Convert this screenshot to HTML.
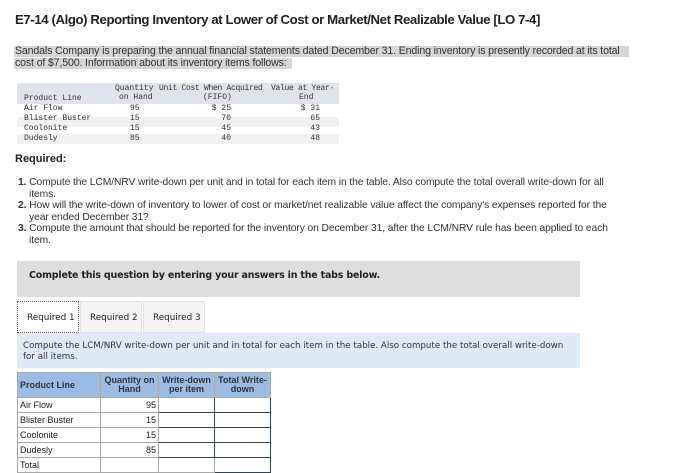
<!DOCTYPE html>
<html><head><style>
body{margin:0;width:700px;height:472px;background:#fff;position:relative;overflow:hidden;font-family:"Liberation Sans",sans-serif;color:#222}
.a{position:absolute;white-space:nowrap}
.m{font-family:"Liberation Mono",monospace;font-size:8px;color:#333}
.li{font-size:10.3px;color:#333;line-height:12px}
td{padding:0}
</style></head><body>
<div class="a" style="left:15px;top:12px;font-size:13.2px;font-weight:bold;letter-spacing:-0.4px">E7-14 (Algo) Reporting Inventory at Lower of Cost or Market/Net Realizable Value [LO 7-4]</div>
<div class="a" style="left:14px;top:46px;width:615px;height:11px;background:#d6d6d6"></div>
<div class="a" style="left:14px;top:58px;width:278px;height:11px;background:#d6d6d6"></div>
<div class="a li" style="left:15px;top:45px;font-size:10.6px;letter-spacing:-0.15px">Sandals Company is preparing the annual financial statements dated December 31. Ending inventory is presently recorded at its total<br>cost of $7,500. Information about its inventory items follows:</div>
<div class="a" style="left:17px;top:83px;width:322px;height:21px;background:#dfe4ec"></div>
<div class="a" style="left:17px;top:117px;width:322px;height:10px;background:#f1f1f1"></div>
<div class="a" style="left:17px;top:134px;width:322px;height:10px;background:#f1f1f1"></div>
<div class="a m" style="left:115px;top:84px">Quantity</div>
<div class="a m" style="left:119px;top:93px">on Hand</div>
<div class="a m" style="left:159px;top:84px;letter-spacing:-0.3px">Unit Cost When Acquired</div>
<div class="a m" style="left:203px;top:93px">(FIFO)</div>
<div class="a m" style="left:271px;top:84px;letter-spacing:-0.3px">Value at Year-</div>
<div class="a m" style="left:299px;top:93px">End</div>
<div class="a m" style="left:24px;top:94px;line-height:10px">Product Line<br>Air Flow<br>Blister Buster<br>Coolonite<br>Dudesly</div>
<div class="a m" style="left:130px;top:104px;line-height:10px">95<br>15<br>15<br>85</div>
<div class="a m" style="left:206px;top:104px;line-height:10px;text-align:right;width:25px">$ 25<br>70<br>45<br>40</div>
<div class="a m" style="left:295px;top:104px;line-height:10px;text-align:right;width:25px">$ 31<br>65<br>43<br>48</div>
<div class="a" style="left:15px;top:153px;font-size:11px;font-weight:bold">Required:</div>
<div class="a li" style="left:18px;top:177px;letter-spacing:-0.1px"><b>1.</b> Compute the LCM/NRV write-down per unit and in total for each item in the table. Also compute the total overall write-down for all<br>&nbsp;&nbsp;&nbsp;&nbsp;items.</div>
<div class="a li" style="left:18px;top:200px;letter-spacing:-0.1px"><b>2.</b> How will the write-down of inventory to lower of cost or market/net realizable value affect the company's expenses reported for the<br>&nbsp;&nbsp;&nbsp;&nbsp;year ended December 31?</div>
<div class="a li" style="left:18px;top:223px;letter-spacing:-0.1px"><b>3.</b> Compute the amount that should be reported for the inventory on December 31, after the LCM/NRV rule has been applied to each<br>&nbsp;&nbsp;&nbsp;&nbsp;item.</div>
<div class="a" style="left:17px;top:261px;width:563px;height:36px;background:#dedede"></div>
<div class="a" style="left:29px;top:270px;font-size:9.5px;font-weight:bold;font-family:'DejaVu Sans',sans-serif;letter-spacing:-0.2px">Complete this question by entering your answers in the tabs below.</div>
<div class="a" style="left:17px;top:301px;width:62px;height:32px;border:1px dotted #666;box-sizing:border-box;background:#fff"></div>
<div class="a" style="left:80px;top:301px;width:62px;height:32px;background:#f4f4f4;border:1px solid #e2e2e2;box-sizing:border-box"></div>
<div class="a" style="left:143px;top:301px;width:62px;height:32px;background:#f4f4f4;border:1px solid #e2e2e2;box-sizing:border-box"></div>
<div class="a" style="left:27px;top:313px;font-size:8.8px;font-family:'DejaVu Sans',sans-serif">Required 1</div>
<div class="a" style="left:90px;top:313px;font-size:8.8px;font-family:'DejaVu Sans',sans-serif">Required 2</div>
<div class="a" style="left:153px;top:313px;font-size:8.8px;font-family:'DejaVu Sans',sans-serif">Required 3</div>
<div class="a" style="left:17px;top:333px;width:563px;height:35px;background:#dfeaf7"></div>
<div class="a" style="left:23px;top:341px;font-size:8.7px;font-family:'DejaVu Sans',sans-serif;line-height:11px;color:#333">Compute the LCM/NRV write-down per unit and in total for each item in the table. Also compute the total overall write-down<br>for all items.</div>
<table style="position:absolute;left:17px;top:372px;border-collapse:collapse;font-size:9px;font-family:'Liberation Sans',sans-serif;table-layout:fixed;width:253px">
<colgroup><col style="width:83px"><col style="width:58px"><col style="width:56px"><col style="width:56px"></colgroup>
<tr style="background:#9bbbe5;height:25px;font-weight:bold;color:#333;text-align:center;line-height:9px">
<td style="border:1px solid #aaa;text-align:left;padding-left:2px">Product Line</td>
<td style="border:1px solid #aaa">Quantity on<br>Hand</td>
<td style="border:1px solid #aaa">Write-down<br>per item</td>
<td style="border:1px solid #aaa">Total Write-<br>down</td></tr>
<tr style="height:15px"><td style="border:1px solid #aaa;padding-left:2px">Air Flow</td><td style="border:1px solid #aaa;text-align:right;padding-right:2px">95</td><td style="border:1px solid #345"></td><td style="border:1px solid #345"></td></tr>
<tr style="height:15px"><td style="border:1px solid #aaa;padding-left:2px">Blister Buster</td><td style="border:1px solid #aaa;text-align:right;padding-right:2px">15</td><td style="border:1px solid #345"></td><td style="border:1px solid #345"></td></tr>
<tr style="height:15px"><td style="border:1px solid #aaa;padding-left:2px">Coolonite</td><td style="border:1px solid #aaa;text-align:right;padding-right:2px">15</td><td style="border:1px solid #345"></td><td style="border:1px solid #345"></td></tr>
<tr style="height:15px"><td style="border:1px solid #aaa;padding-left:2px">Dudesly</td><td style="border:1px solid #aaa;text-align:right;padding-right:2px">85</td><td style="border:1px solid #345"></td><td style="border:1px solid #345"></td></tr>
<tr style="height:15px"><td style="border:1px solid #aaa;padding-left:2px">Total</td><td style="border:1px solid #aaa"></td><td style="border:1px solid #aaa"></td><td style="border:1px solid #345"></td></tr>
</table>
</body></html>
